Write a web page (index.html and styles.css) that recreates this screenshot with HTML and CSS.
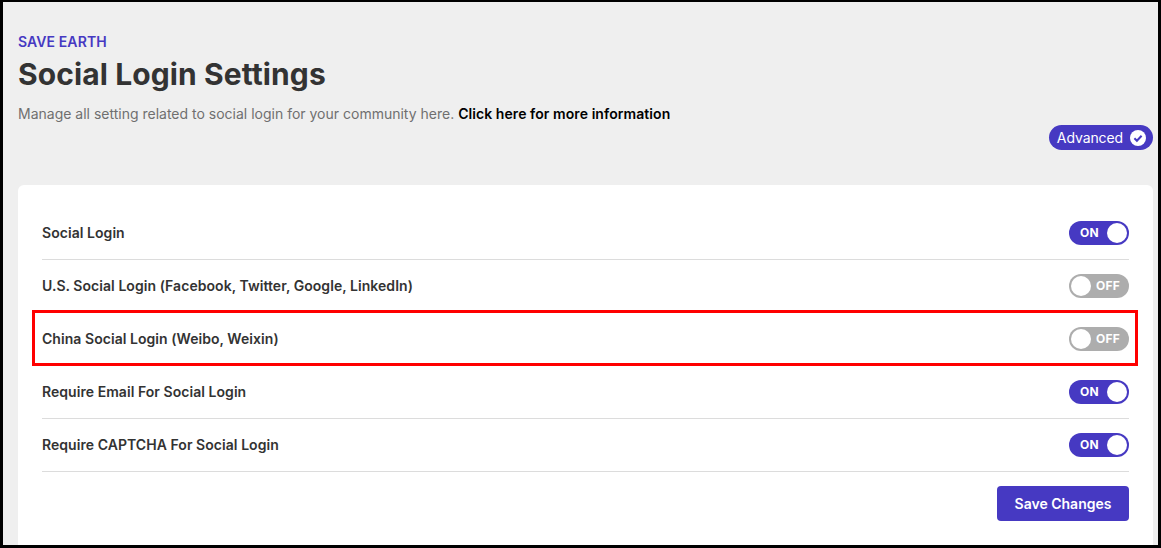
FILE: index.html
```html
<!DOCTYPE html>
<html lang="en">
<head>
<meta charset="utf-8">
<title>Social Login Settings</title>
<link rel="stylesheet" href="styles.css">
</head>
<body>
<div class="frame">
  <header class="head">
    <div class="eyebrow">SAVE EARTH</div>
    <h1 class="title">Social Login Settings</h1>
    <p class="desc">Manage all setting related to social login for your community here. <a class="link">Click here for more information</a></p>
  </header>
  <div class="adv-wrap">
    <div class="adv">Advanced
      <svg class="adv-icon" width="16" height="16" viewBox="0 0 16 16"><circle cx="8" cy="8" r="8" fill="#fff"/><path d="M4.4 8.3l2.5 2.5 4.7-5" fill="none" stroke="#4639c2" stroke-width="2"/></svg>
    </div>
  </div>
  <section class="card">
    <div class="row"><span class="label">Social Login</span><span class="toggle on"><span class="txt">ON</span><span class="knob"></span></span></div>
    <div class="row"><span class="label">U.S. Social Login (Facebook, Twitter, Google, LinkedIn)</span><span class="toggle off"><span class="knob"></span><span class="txt">OFF</span></span></div>
    <div class="row highlighted"><span class="label">China Social Login (Weibo, Weixin)</span><span class="toggle off"><span class="knob"></span><span class="txt">OFF</span></span><span class="redbox"></span></div>
    <div class="row"><span class="label">Require Email For Social Login</span><span class="toggle on"><span class="txt">ON</span><span class="knob"></span></span></div>
    <div class="row"><span class="label">Require CAPTCHA For Social Login</span><span class="toggle on"><span class="txt">ON</span><span class="knob"></span></span></div>
    <div class="actions"><button class="save">Save Changes</button></div>
  </section>
</div>
</body>
</html>
```
FILE: styles.css
```css
* { box-sizing: border-box; }
html, body { margin: 0; padding: 0; }
body { font-family: Inter, "Liberation Sans", sans-serif; background: #efefef; }
.frame {
  width: 1161px;
  height: 548px;
  overflow: hidden;
  border: solid #000;
  border-width: 2px 3px 3px 3px;
  background: #efefef;
  padding: 0 5px 0 15px;
}
.head { padding-top: 32px; }
.eyebrow { font-size: 14px; line-height: 15px; font-weight: 600; color: #4639c2; letter-spacing: 0.1px; }
.title { margin: 7px 0 0; font-size: 30px; line-height: 36px; font-weight: 700; color: #333; letter-spacing: 0.1px; }
.desc { margin: 12px 0 0; font-size: 14px; line-height: 20px; color: #6f6f6f; }
.link { color: #000; font-weight: 600; letter-spacing: 0.07px; }
.adv-wrap { display: flex; justify-content: flex-end; margin-top: 1px; }
.adv {
  display: flex; align-items: center; gap: 7px;
  height: 25px; padding: 0 7px 0 8px;
  border-radius: 13px; background: #4639c2; color: #fff;
  font-size: 14px; letter-spacing: -0.1px;
}
.card {
  margin-top: 35px;
  height: 400px;
  background: #fff;
  border-radius: 6px;
  padding: 22px 24px 0;
}
.row {
  position: relative;
  display: flex; align-items: center; justify-content: space-between;
  height: 53px;
  padding-bottom: 1px;
  border-bottom: 1px solid #dcdcdc;
}
.row.highlighted { border-bottom-color: transparent; }
.label { font-size: 14px; font-weight: 600; color: #333; letter-spacing: 0.05px; }
.toggle {
  display: flex; align-items: center; justify-content: space-between;
  width: 60px; height: 24px; border-radius: 12px; padding: 2px;
  color: #fff; font-size: 12px; font-weight: 700; letter-spacing: 0.2px;
}
.toggle.on { background: #4639c2; padding-left: 11px; }
.toggle.off { background: #adadad; padding-right: 9px; }
.knob { width: 20px; height: 20px; border-radius: 50%; background: #fff; }
.redbox {
  position: absolute; left: -10px; right: -9px; top: -3px; bottom: -1px;
  border: 3px solid #f00;
  pointer-events: none;
}
.actions { display: flex; justify-content: flex-end; margin-top: 14px; }
.save {
  width: 132px; height: 35px; border: 0; border-radius: 4px;
  background: #4639c2; color: #fff;
  font: 600 14px Inter, "Liberation Sans", sans-serif;
}
```
